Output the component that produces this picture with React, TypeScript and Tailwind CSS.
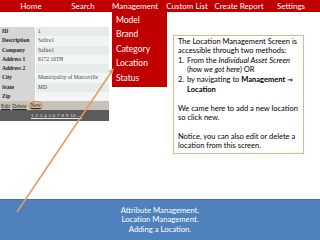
const navItems = ['Home', 'Search', 'Management', 'Custom List', 'Create Report', 'Settings'];
const menuItems = ['Model', 'Brand', 'Category', 'Location', 'Status'];
const rows: [string, string][] = [
  ['ID', '1'],
  ['Description', 'Safire1'],
  ['Company', 'Safire1'],
  ['Address 1', '6172 10TH'],
  ['Address 2', ''],
  ['City', 'Municipality of Marcoville'],
  ['State', 'MD'],
  ['Zip', ''],
];

const sans = "font-['Lato','Open_Sans',sans-serif]";

export default function App() {
  return (
    <div className="relative w-[320px] h-[240px] overflow-hidden bg-white">
      <div className={`flex h-[12px] bg-[#c00000] pl-[5px] text-[8px] leading-[12px] text-white ${sans}`}>
        {navItems.map(it => (
          <div key={it} className="w-[52px] text-center whitespace-nowrap">
            {it}
          </div>
        ))}
      </div>
      <div className="flex h-[187px]">
        <div className="mt-[15px] w-[109px] font-['Liberation_Serif',serif]">
          {rows.map(([k, v], i) => (
            <div key={k} className="flex h-[9.3px] text-[5.5px] leading-[9.3px]">
              <div className="w-[35px] bg-[#d6d6d6] pl-[2px] font-bold text-[#222]">{k}</div>
              <div
                className={`flex-1 border-l border-white pl-[2px] text-[#444] ${i % 2 ? 'bg-[#f3f5f5]' : 'bg-[#e6ebec]'}`}
              >
                {v}
              </div>
            </div>
          ))}
          <div className="flex h-[9px] items-center gap-[2px] bg-[#c9c2b7] pl-[1px] text-[5.5px] text-[#222] underline">
            <span>Edit</span>
            <span>Delete</span>
            <span className="rounded-[50%] border border-[#e8883a] px-[1px] leading-[7px]">New</span>
          </div>
          <div className="flex h-[11px] items-center bg-[#5b5b5b] pl-[31px] text-[5px] tracking-[0.3px] text-[#e8e8e8] underline">
            1 2 3 4 5 6 7 8 9 10 ...
          </div>
        </div>
        <div className={`ml-[3px] flex h-[75px] w-[55px] flex-col bg-[#c00000] pl-[4px] pt-[1px] text-[8.5px] text-white ${sans}`}>
          {menuItems.map(it => (
            <div key={it} className="h-[14.4px] leading-[14.4px]">
              {it}
            </div>
          ))}
        </div>
        <div
          className={`ml-[6px] mt-[23px] h-[119px] w-[131px] border border-[#f4b183] px-[4px] pt-[1px] text-[7.5px] leading-[9.4px] text-black ${sans}`}
        >
          <div>The Location Management Screen is accessible through two methods:</div>
          <div className="flex">
            <span className="w-[9px] shrink-0">1.</span>
            <span>
              From the <i>Individual Asset Screen</i> (<i>how we got here</i>) OR
            </span>
          </div>
          <div className="flex">
            <span className="w-[9px] shrink-0">2.</span>
            <span>
              by navigating to <b>Management</b> <b className="font-['DejaVu_Sans',sans-serif] text-[6.5px]">→</b>{' '}
              <b>Location</b>
            </span>
          </div>
          <div className="mt-[9.4px] whitespace-nowrap">We came here to add a new location</div>
          <div>so click new.</div>
          <div className="mt-[9.4px]">Notice, you can also edit or delete a location from this screen.</div>
        </div>
      </div>
      <div
        className={`flex h-[41px] flex-col items-center justify-center border-t border-[#3f6fa8] bg-[#4f81bd] text-[7.7px] leading-[9.5px] text-white ${sans}`}
      >
        <div>Attribute Management.</div>
        <div>Location Management.</div>
        <div>Adding a Location.</div>
      </div>
      <svg className="pointer-events-none absolute left-0 top-0" width="320" height="240">
        <line x1="17" y1="212" x2="112" y2="71" stroke="#e59a63" strokeWidth="1.5" />
        <polygon points="114,68 108.5,71.5 112.5,74" fill="#e59a63" />
      </svg>
    </div>
  );
}
